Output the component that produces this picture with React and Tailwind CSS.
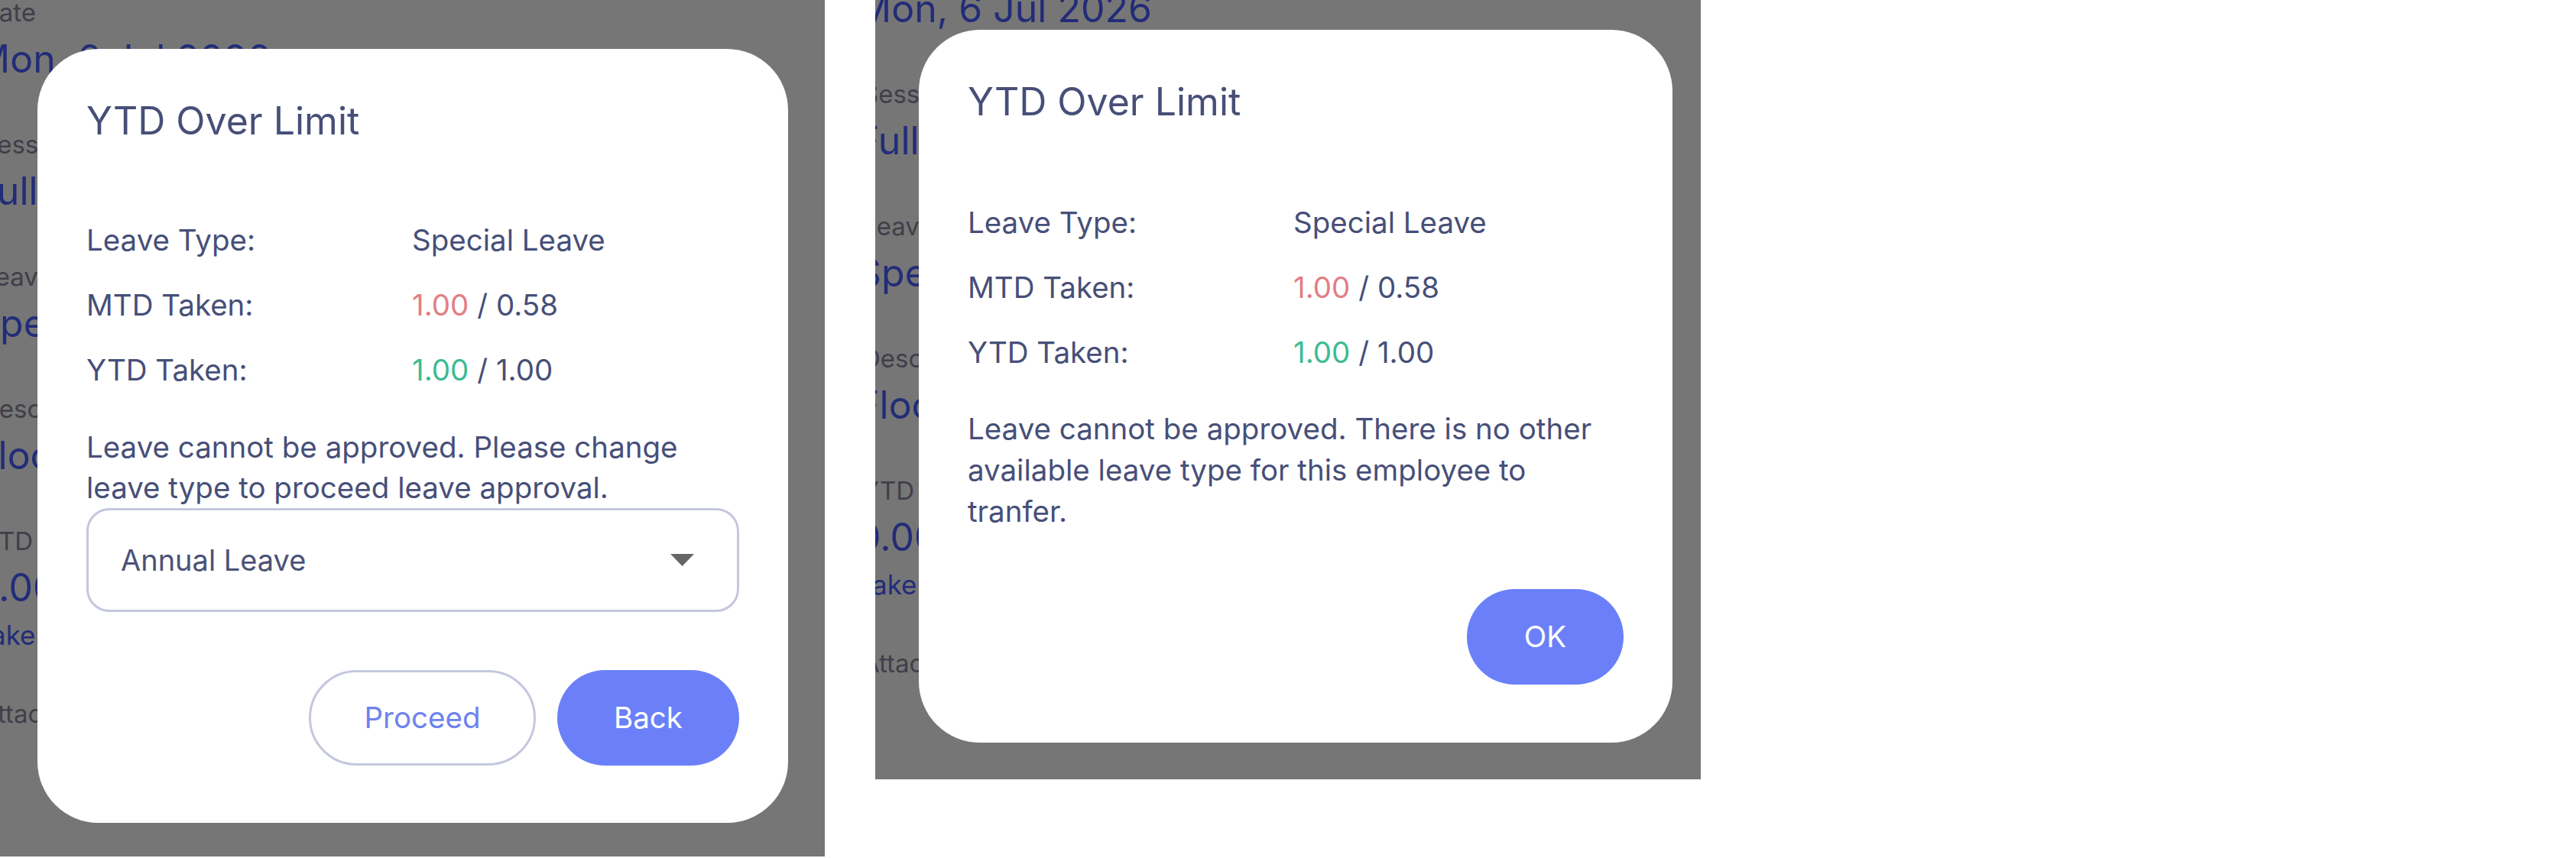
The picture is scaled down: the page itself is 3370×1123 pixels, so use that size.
import React from "react";

function Background({ shift }) {
  const fields = [
    { label: "Date", value: "Mon, 6 Jul 2026" },
    { label: "Session", value: "Full Day" },
    { label: "Leave Type", value: "Special Leave" },
    { label: "Description", value: "Flood" },
  ];
  return (
    <div className={`flex flex-col gap-[62px] ${shift}`}>
      {fields.map((f) => (
        <div key={f.label} className="flex flex-col gap-[11px] whitespace-nowrap">
          <div className="text-[33px] leading-[40px] text-[#3f3f49]">{f.label}</div>
          <div className="ml-[-7px] text-[50px] leading-[60px] text-[#222c78]">{f.value}</div>
        </div>
      ))}
      <div className="flex flex-col gap-[11px] whitespace-nowrap">
        <div className="text-[33px] leading-[40px] text-[#3f3f49]">YTD Taken</div>
        <div className="ml-[-7px] text-[50px] leading-[60px] text-[#222c78]">0.00</div>
        <div className="ml-[-7px] text-[35px] leading-[42px] text-[#222c78]">Taken</div>
      </div>
      <div className="text-[33px] leading-[40px] text-[#3f3f49] whitespace-nowrap">Attachment</div>
    </div>
  );
}

function Row({ label, children }) {
  return (
    <div className="flex text-[38.5px] leading-[46px]">
      <div className="w-[426px] shrink-0">{label}</div>
      <div>{children}</div>
    </div>
  );
}

function Rows() {
  return (
    <div className="flex flex-col gap-[39px]">
      <Row label="Leave Type:">Special Leave</Row>
      <Row label="MTD Taken:">
        <span className="text-[#e37d86]">1.00</span> / 0.58
      </Row>
      <Row label="YTD Taken:">
        <span className="text-[#3dbb93]">1.00</span> / 1.00
      </Row>
    </div>
  );
}

export default function App() {
  return (
    <div className="w-[3370px] h-[1123px] bg-white flex items-start font-['Inter','Noto_Sans',sans-serif] text-[#474f78]">
      {/* Panel 1 */}
      <div className="relative w-[1079px] h-[1121px] bg-[#767676] overflow-hidden shrink-0">
        <Background shift="mt-[-4px] ml-[-25px]" />
        <div className="absolute left-[49px] top-[64px] w-[982px] h-[1013px] bg-white rounded-[80px] px-[64px] pt-[64px] pb-[75px] flex flex-col">
          <div className="text-[50px] leading-[60px]">YTD Over Limit</div>
          <div className="mt-[103px]">
            <Rows />
          </div>
          <p className="mt-[52px] text-[38.5px] leading-[53px] whitespace-nowrap">
            Leave cannot be approved. Please change
            <br />
            leave type to proceed leave approval.
          </p>
          <div className="h-[136px] border-[3px] border-[#c4c7df] rounded-[30px] flex items-center justify-between pl-[42px] pr-[56px]">
            <span className="text-[38px] text-[#4b5276]">Annual Leave</span>
            <svg width="31" height="16" viewBox="0 0 31 16">
              <path d="M0 0 L31 0 L15.5 16 Z" fill="#666666" />
            </svg>
          </div>
          <div className="mt-[76px] flex justify-end gap-[28px]">
            <button className="h-[125px] w-[297px] rounded-full border-[3px] border-[#c4c7df] bg-white text-[38.5px] text-[#6e82ef]">
              Proceed
            </button>
            <button className="h-[125px] w-[238px] rounded-full bg-[#6b80f8] text-[38.5px] text-white">
              Back
            </button>
          </div>
        </div>
      </div>

      {/* Panel 2 */}
      <div className="relative ml-[66px] w-[1080px] h-[1020px] bg-[#767676] overflow-hidden shrink-0">
        <Background shift="mt-[-70px] ml-[-17px]" />
        <div className="absolute left-[57px] top-[39px] w-[986px] h-[933px] bg-white rounded-[80px] px-[64px] pt-[64px] pb-[75px] flex flex-col">
          <div className="text-[50px] leading-[60px]">YTD Over Limit</div>
          <div className="mt-[105px]">
            <Rows />
          </div>
          <p className="mt-[50px] text-[38.5px] leading-[54px] whitespace-nowrap">
            Leave cannot be approved. There is no other
            <br />
            available leave type for this employee to
            <br />
            tranfer.
          </p>
          <div className="mt-[75px] flex justify-end">
            <button className="h-[125px] w-[205px] rounded-full bg-[#6b80f8] text-[38.5px] text-white">
              OK
            </button>
          </div>
        </div>
      </div>
    </div>
  );
}
